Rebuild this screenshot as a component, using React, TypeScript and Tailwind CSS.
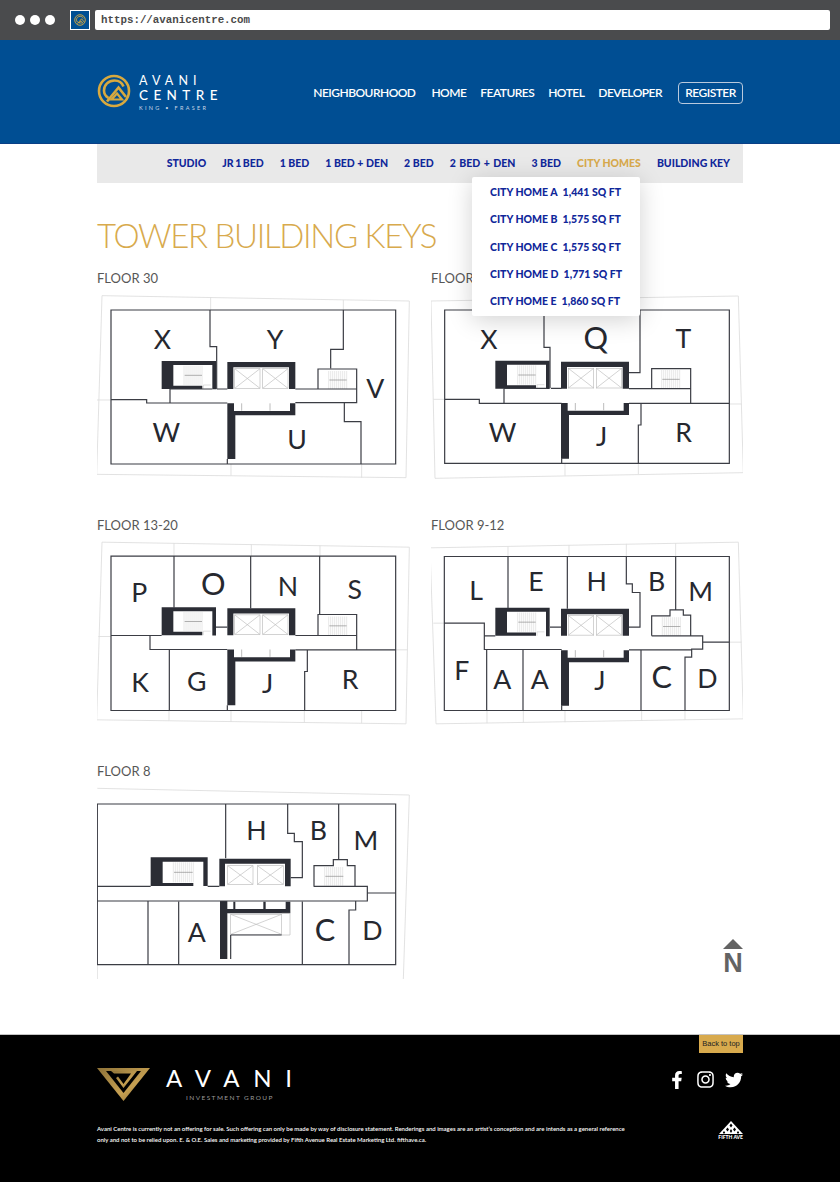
import type { ReactNode } from "react";
import { FaFacebookF, FaInstagram, FaTwitter } from "react-icons/fa";

const wall = "#3b3d44";
const dark = "#2b2d35";
const faint = "#dcdcdc";

const unitLinks = [
  { label: "STUDIO", cls: "" },
  { label: "JR 1 BED", cls: "[word-spacing:-1px]" },
  { label: "1 BED", cls: "" },
  { label: "1 BED + DEN", cls: "" },
  { label: "2 BED", cls: "" },
  { label: "2 BED + DEN", cls: "[word-spacing:1px]" },
  { label: "3 BED", cls: "" },
  { label: "CITY HOMES", cls: "text-[#d8aa4d]" },
  { label: "BUILDING KEY", cls: "" },
];

const cityHomes = [
  ["CITY HOME A", "1,441 SQ FT"],
  ["CITY HOME B", "1,575 SQ FT"],
  ["CITY HOME C", "1,575 SQ FT"],
  ["CITY HOME D", "1,771 SQ FT"],
  ["CITY HOME E", "1,860 SQ FT"],
];

// letter, x, baseline y, optional size for the wide round glyphs
type Letter = [string, number, number, number?];

function AvaniRing({ size }: { size: number }) {
  return (
    <svg width={size} height={size} viewBox="0 0 34 34" fill="none" stroke="#d8a93f" strokeWidth="2.6">
      <circle cx="17" cy="17" r="15" />
      <path d="M26.5 12.5C25 8.5 21.5 6.5 17.5 6.5C11.5 6.5 7 11 7 16.5C7 20 9 22.5 11.5 24" />
      <path d="M10 27.5L21.5 13.5L29 23" />
      <path d="M14.5 25.5H25L20 19.5Z" strokeWidth="2.2" />
    </svg>
  );
}

function Hatch({ x, y, w, h }: { x: number; y: number; w: number; h: number }) {
  const lines = Array.from({ length: Math.floor(w / 6) + 1 }, (_, i) => x + i * 6);
  return (
    <g>
      {lines.map((lx) => (
        <line key={lx} x1={lx} y1={y} x2={lx} y2={y + h} stroke="#d4d4d4" strokeWidth="1.6" />
      ))}
      <line x1={x + 2} y1={y + h / 2} x2={x + w - 2} y2={y + h / 2} stroke="#8c8c8c" strokeWidth="2" />
    </g>
  );
}

function Lift({ x, y, w, h }: { x: number; y: number; w: number; h: number }) {
  return (
    <g fill="none" stroke="#bdbdbd" strokeWidth="2">
      <rect x={x} y={y} width={w} height={h} />
      <path d={`M${x} ${y}L${x + w} ${y + h}M${x + w} ${y}L${x} ${y + h}`} />
    </g>
  );
}

function Core({ dx = 0, dy = 0 }: { dx?: number; dy?: number }) {
  return (
    <g transform={`translate(${dx} ${dy})`}>
      <path
        fill={dark}
        d="M215 288H378V373H367V300H250V362H337V372H215ZM412 291H616V372H597V307H430V372H412ZM412 415H432V438H600V415H616V451H436V582H412Z"
      />
      <Hatch x={282} y={302} w={56} h={58} />
      <Lift x={434} y={311} w={76} h={59} />
      <Lift x={518} y={311} w={76} h={59} />
      <path d="M455 415V437M540 415V437" stroke="#9a9a9a" strokeWidth="2" />
      <path d="M340 372V360H362" fill="none" stroke="#cfcfcf" strokeWidth="2" />
    </g>
  );
}

function Plan({
  viewBox,
  width,
  height,
  outline,
  walls,
  letters,
  children,
}: {
  viewBox: string;
  width: number;
  height: number;
  outline: string;
  walls: string;
  letters: Letter[];
  children: ReactNode;
}) {
  return (
    <svg width={width} height={height} viewBox={viewBox} className="block">
      <path d={outline} fill="none" stroke={faint} strokeWidth="2.5" />
      {children}
      <path d={walls} fill="none" stroke={wall} strokeWidth="3.6" />
      {letters.map(([t, x, y, size], i) => (
        <text key={i} x={x} y={y} textAnchor="middle" fontSize={size ?? 80} fill="#26282f">
          {t}
        </text>
      ))}
    </svg>
  );
}

function FloorLabel({ children }: { children: ReactNode }) {
  return <h3 className="h-4 text-[13px] leading-4 text-[#575757]">{children}</h3>;
}

function FifthAve() {
  return (
    <div className="mt-[-2px] flex flex-col items-center">
      <svg width="24" height="13" viewBox="0 0 24 13">
        <path d="M12 0L24 13H0Z" fill="#fff" />
        <path
          d="M12 2.5L13.5 4.5L12 6.5L10.5 4.5ZM8.5 6.5L10 8.5L8.5 10.5L7 8.5ZM15.5 6.5L17 8.5L15.5 10.5L14 8.5ZM12 8L13.2 10L12 12L10.8 10ZM5 10L6.2 11.5L5 13L3.8 11.5ZM19 10L20.2 11.5L19 13L17.8 11.5Z"
          fill="#000"
        />
      </svg>
      <span className="mt-px text-[5px] leading-[5px] font-black text-white">FIFTH AVE</span>
    </div>
  );
}

export default function App() {
  return (
    <div className="flex min-h-[1182px] flex-col bg-white [font-family:Lato,sans-serif]">
      {/* Browser chrome */}
      <div className="flex h-10 items-center bg-[#4a4b4d] pr-[10px] pl-[15px]">
        <div className="flex gap-[5px]">
          <span className="h-[10px] w-[10px] rounded-full bg-white" />
          <span className="h-[10px] w-[10px] rounded-full bg-white" />
          <span className="h-[10px] w-[10px] rounded-full bg-white" />
        </div>
        <div className="ml-[15px] flex h-5 w-5 items-center justify-center border border-white bg-[#004f93]">
          <AvaniRing size={12} />
        </div>
        <div className="ml-[5px] flex h-5 flex-1 items-center rounded-[2px] bg-white pl-[6px] text-[10.8px] font-bold text-[#4a4a4a] [font-family:'Liberation_Mono',monospace]">
          https://avanicentre.com
        </div>
      </div>

      {/* Site header */}
      <header className="flex h-[104px] justify-between border-b border-[#0a3f86] bg-[#004e93] px-[97px] pt-[34px]">
        <div className="flex items-start gap-2">
          <AvaniRing size={34} />
          <div className="flex flex-col text-white">
            <span className="text-[12.5px] leading-[14px] tracking-[0.41em]">AVANI</span>
            <span className="mt-px text-[13.5px] leading-[13px] font-medium tracking-[0.4em]">CENTRE</span>
            <span className="mt-[3px] text-[5.5px] leading-[7px] tracking-[0.42em] text-[#c9d6e6]">KING • FRASER</span>
          </div>
        </div>
        <nav className="mt-2 flex h-[22px] items-center text-[12px] font-semibold tracking-[-0.045em] text-white">
          <a className="mr-4">NEIGHBOURHOOD</a>
          <a className="mr-[14px]">HOME</a>
          <a className="mr-[14px]">FEATURES</a>
          <a className="mr-[14px]">HOTEL</a>
          <a className="mr-4">DEVELOPER</a>
          <a className="flex h-[22px] w-[65px] items-center justify-center rounded-[4px] border border-[#b9c9dd]">REGISTER</a>
        </nav>
      </header>

      <main className="flex-1 px-[97px]">
        {/* Unit type nav */}
        <div className="relative flex h-[39px] items-center justify-end gap-4 bg-[#e9e9e9] pr-[13px] text-[10.5px] font-black text-[#10279a]">
          {unitLinks.map((l) => (
            <a key={l.label} className={l.cls}>
              {l.label}
            </a>
          ))}
          <div className="absolute top-[33px] left-[375px] z-10 flex h-[139px] w-[168px] flex-col justify-center gap-[11.2px] rounded-[2px] bg-white pl-[18px] shadow-[0_4px_24px_rgba(0,0,0,0.18)]">
            {cityHomes.map(([name, size]) => (
              <div key={name} className="flex h-[16px] items-center gap-[5px] leading-4">
                <span>{name}</span>
                <span>{size}</span>
              </div>
            ))}
          </div>
        </div>

        <h1 className="mt-[30px] text-[33px] leading-[44px] font-light tracking-[-0.04em] text-[#d8aa4d]">
          TOWER BUILDING KEYS
        </h1>

        <div className="mt-[13px] grid grid-cols-[313px_312px] gap-x-[21px] gap-y-[34.5px]">
          <div className="flex flex-col gap-[6px]">
            <FloorLabel>FLOOR 30</FloorLabel>
            <Plan
              viewBox="21 81 939 570"
              width={313}
              height={190}
              outline="M36 92L958 108L948 638L20 628ZM362 97V135M760 105V135M20 405H63M423 597V632M815 597V638"
              walls="M63 135H917V597H63ZM360 135V245H380V372M760 135V253H722V310M684 372V312H800V413H616M684 372H800M240 372H367M380 372H412M616 372H684M412 414H170V404H63M240 372V414M763 414V470H813V597M412 582V597"
              letters={[
                ["X", 217, 252],
                ["Y", 555, 252],
                ["V", 856, 400],
                ["W", 229, 532],
                ["U", 621, 552],
              ]}
            >
              <Core />
              <Hatch x={716} y={318} w={56} h={54} />
            </Plan>
          </div>

          <div className="flex flex-col gap-[6px]">
            <FloorLabel>FLOOR 21-29</FloorLabel>
            <Plan
              viewBox="18 6 936 570"
              width={312}
              height={190}
              outline="M18 33L940 18L955 548L30 565ZM25 328H59M913 342H950M420 520V557M640 520V552"
              walls="M59 60H913V520H59ZM357 60V172H375V295M645 60V248H612M680 296V236H797V340M680 296H797M237 295H365M378 295H410M612 296H680M797 340H612M410 340H163V328H59M237 295V340M797 340H913M648 340V405H640V520M410 505V520"
              letters={[
                ["X", 192, 177],
                ["Q", 512, 176, 92],
                ["T", 775, 174],
                ["W", 233, 456],
                ["J", 530, 468],
                ["R", 776, 456],
              ]}
            >
              <Core dx={-4} dy={-76} />
              <Hatch x={710} y={240} w={56} h={56} />
            </Plan>
          </div>

          <div className="flex flex-col gap-[6px]">
            <FloorLabel>FLOOR 13-20</FloorLabel>
            <Plan
              viewBox="21 85.5 939 570"
              width={313}
              height={190}
              outline="M36 95L958 110L948 640L20 628ZM252 98V137M484 102V137M690 106V137M25 378H63M917 418H952M237 600V630M423 600V634M643 600V636M815 600V638"
              walls="M63 137H917V600H63ZM252 137V292M482 137V294M689 137V312M684 375V312H800V417M684 375H800M180 375V417H412M63 375H215M238 417V600M378 350H412M616 375H684M616 418H917M652 418V483H644V600M412 584V600"
              letters={[
                ["P", 148, 274],
                ["O", 370, 253, 92],
                ["N", 594, 255],
                ["S", 794, 265],
                ["K", 150, 543],
                ["G", 320, 542],
                ["J", 533, 548],
                ["R", 780, 536],
              ]}
            >
              <Core dy={2} />
              <Hatch x={716} y={318} w={56} h={56} />
            </Plan>
          </div>

          <div className="flex flex-col gap-[6px]">
            <FloorLabel>FLOOR 9-12</FloorLabel>
            <Plan
              viewBox="18 85.5 936 570"
              width={312}
              height={190}
              outline="M15 112L940 95L955 625L33 640ZM249 108V138M432 104V138M604 100V138M752 98V138M25 338H58M913 395H950M186 600V638M295 600V636M420 600V635M650 600V630M780 600V628"
              walls="M58 138H913V600H58ZM249 138V293M427 138V295M604 138V220H622V246H645V350H612M752 138V298M680 376V316H735V298H775V314H797V376H833V416H800V440H780V600M680 376H797M833 395H913M58 338H178V417H410M178 376H211M185 417V600M294 417V600M375 350H408M648 417V600M612 418H800M410 585V600"
              letters={[
                ["L", 153, 268],
                ["E", 333, 242],
                ["H", 515, 242],
                ["B", 695, 242],
                ["M", 827, 272],
                ["F", 110, 508],
                ["A", 232, 535],
                ["A", 344, 535],
                ["J", 525, 538],
                ["C", 710, 533, 92],
                ["D", 847, 531],
              ]}
            >
              <Core dx={-4} dy={4} />
              <Hatch x={712} y={320} w={56} h={56} />
            </Plan>
          </div>

          <div className="flex flex-col gap-[6px]">
            <FloorLabel>FLOOR 8</FloorLabel>
            <Plan
              viewBox="21 90 939 588"
              width={313}
              height={196}
              outline="M22 100L958 120L940 672M22 629V672"
              walls="M22 147H917V629H22ZM407 147V310M593 147V235H613V260H637V368H602M746 147V312M672 395V332H730V314H772V332H795V394H832V438H797V465H777V629M672 394H795M832 414H917M22 394H182M353 394H388M22 438H832M174 438V629M266 440V629H388M637 440V629M422 540H575M422 540V612"
              letters={[
                ["H", 499, 256],
                ["B", 685, 255],
                ["M", 828, 285],
                ["A", 320, 561],
                ["C", 705, 559, 92],
                ["D", 847, 555],
              ]}
            >
              <path
                fill={dark}
                d="M182 307H353V393H340V320H218V384H310V393H182ZM388 311H602V394H585V326H405V394H388ZM390 438H412V612H390ZM412 462H601V475H412ZM587 440H601V462H587ZM430 440H436V462H430ZM520 440H527V462H520Z"
              />
              <Hatch x={250} y={322} w={60} h={60} />
              <Lift x={413} y={332} w={76} h={56} />
              <Lift x={502} y={332} w={78} h={56} />
              <Lift x={422} y={478} w={153} h={60} />
              <path d="M575 475H600V540H575" fill="none" stroke="#bdbdbd" strokeWidth="2" />
              <Hatch x={704} y={336} w={58} h={56} />
            </Plan>
          </div>

          <div className="flex items-end justify-end pb-[6px]">
            <div className="flex w-5 flex-col items-center">
              <span className="h-0 w-0 border-x-[10px] border-b-[10px] border-x-transparent border-b-[#636363]" />
              <span className="mt-[2px] text-[27px] leading-[24px] font-bold text-[#636363] [font-family:'Liberation_Sans',sans-serif]">N</span>
            </div>
          </div>
        </div>
      </main>

      {/* Footer */}
      <footer className="relative h-[148px] border-t border-[#c4c4c4] bg-black px-[97px] pt-[33px]">
        <a className="absolute top-0 right-[97px] flex h-[18px] w-[44px] items-center justify-center bg-[#d8aa4d] text-[7.5px] text-[#222] [font-family:'Liberation_Sans',sans-serif]">
          Back to top
        </a>
        <div className="flex items-start justify-between">
          <div className="flex items-start gap-4">
            <svg width="53" height="33" viewBox="0 0 53 33">
              <defs>
                <linearGradient id="gold" x1="0" y1="0" x2="1" y2="1">
                  <stop offset="0" stopColor="#8f7338" />
                  <stop offset="0.6" stopColor="#c6a052" />
                  <stop offset="1" stopColor="#8a6d33" />
                </linearGradient>
              </defs>
              <path d="M0 0H53L26.5 33Z" fill="url(#gold)" />
              <path d="M9 3H44L26.5 25Z" fill="#000" />
              <path d="M14 3H40L26.5 20L19 10L21 8.5L26.5 16L34 5.5H17Z" fill="url(#gold)" />
            </svg>
            <div className="flex flex-col items-start">
              <span className="text-[24px] leading-[20px] tracking-[0.57em] whitespace-nowrap text-white">AVANI</span>
              <span className="mt-[6px] ml-[20px] text-[6.5px] leading-[8px] tracking-[0.22em] whitespace-nowrap text-[#9a9a9a]">INVESTMENT GROUP</span>
            </div>
          </div>
          <div className="flex items-center gap-[10px] pt-[2px] text-[18px] text-white">
            <FaFacebookF />
            <FaInstagram className="text-[19px]" />
            <FaTwitter />
          </div>
        </div>
        <div className="mt-[21px] flex items-start justify-between">
          <p className="w-[535px] text-[6px] leading-[11px] font-semibold text-white">
            Avani Centre is currently not an offering for sale. Such offering can only be made by way of disclosure statement. Renderings and images are an artist’s conception and are intends as a general reference only and not to be relied upon. E. &amp; O.E. Sales and marketing provided by Fifth Avenue Real Estate Marketing Ltd. fifthave.ca.
          </p>
          <FifthAve />
        </div>
      </footer>
    </div>
  );
}
